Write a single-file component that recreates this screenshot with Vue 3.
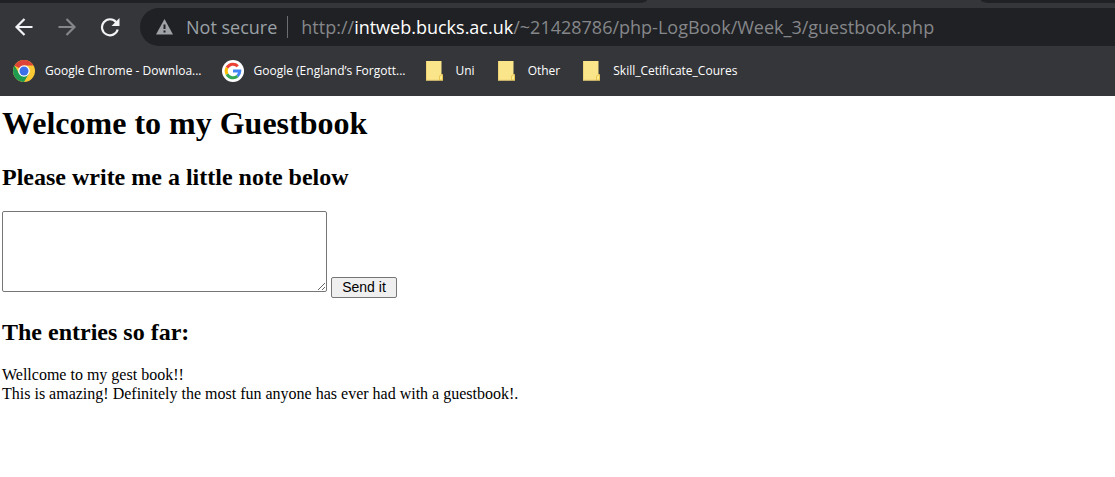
<script setup>
import { ref } from 'vue'

const note = ref('')
const folders = ['Uni', 'Other', 'Skill_Cetificate_Coures']
const entries = [
  'Wellcome to my gest book!!',
  'This is amazing! Definitely the most fun anyone has ever had with a guestbook!.',
]
</script>

<template>
  <div class="browser">
    <header class="chrome">
      <div class="tabs">
        <div class="tab-left"></div>
        <div class="tab-right"></div>
      </div>
      <div class="toolbar">
        <nav class="nav">
          <button type="button" aria-label="Back">
            <svg width="20" height="20" viewBox="0 0 20 20" fill="none" stroke="#f1f3f4" stroke-width="2.2">
              <path d="M18.500 10H3M10.500 2 2.500 10l8 8" />
            </svg>
          </button>
          <button type="button" aria-label="Forward" disabled>
            <svg width="20" height="20" viewBox="0 0 20 20" fill="none" stroke="#85868a" stroke-width="2.2">
              <path d="M1.500 10h16M9.500 2l8 8-8 8" />
            </svg>
          </button>
          <button type="button" aria-label="Reload">
            <svg width="20" height="20" viewBox="0 0 20 20">
              <path d="M16.200 5.200A8 8 0 1 0 17.700 12.500" fill="none" stroke="#f1f3f4" stroke-width="2.2" />
              <path d="M19.500 1v8h-8z" fill="#f1f3f4" />
            </svg>
          </button>
        </nav>
        <div class="omnibox">
          <svg class="warn" width="17" height="16" viewBox="0 0 17 16">
            <path d="M8.500 0 17 15.500H0z" fill="#9fa2a6" />
            <path d="M7.500 5.500h2v4.500h-2zM7.500 11.500h2v2h-2z" fill="#202124" />
          </svg>
          <span class="secure">Not secure</span>
          <span class="rule"></span>
          <span class="url">http://<b>intweb.bucks.ac.uk</b>/~21428786/php-LogBook/Week_3/guestbook.php</span>
        </div>
      </div>
      <nav class="bookmarks">
        <a class="mark" href="#">
          <svg width="22" height="22" viewBox="0 0 22 22">
            <circle cx="11" cy="11" r="11" fill="#fbc934" />
            <path d="M11 11 1.500 5.500A11 11 0 0 1 20.500 5.500H11z" fill="#dc4437" />
            <path d="M1.500 5.500A11 11 0 0 0 11 22L15.800 13.700 11 11 6.300 13.700z" fill="#1e9b50" />
            <circle cx="11" cy="11" r="5.800" fill="#fff" />
            <circle cx="11" cy="11" r="4.500" fill="#3c70e8" />
          </svg>
          <span>Google Chrome - Downloa...</span>
        </a>
        <a class="mark" href="#">
          <svg width="22" height="22" viewBox="0 0 22 22">
            <circle cx="11" cy="11" r="11" fill="#fff" />
            <g fill="none" stroke-width="3">
              <path d="M5 7.800A6.800 6.800 0 0 1 15.800 6.200" stroke="#ea4335" />
              <path d="M5 14.200A6.800 6.800 0 0 1 5 7.800" stroke="#fbbc05" />
              <path d="M15.500 16.100A6.800 6.800 0 0 1 5 14.200" stroke="#34a853" />
              <path d="M11 11h6.800A6.800 6.800 0 0 1 15.500 16.100" stroke="#4285f4" />
            </g>
          </svg>
          <span>Google (England’s Forgott...</span>
        </a>
        <div class="folders">
          <a v-for="name in folders" :key="name" class="mark" href="#">
            <svg class="folder" width="17" height="20" viewBox="0 0 17 20">
              <path d="M0 0h15.500v13l1.500.8v5.700H0z" fill="#fbe58b" />
              <path d="M0 19.500V0h1v18.500h12v1z" fill="#efd477" />
              <path d="M13 19.500v-4.500l2-1.500h2v6z" fill="#e9c552" />
              <path d="M14 18.500v-3l1-1h1v4z" fill="#ffed91" />
            </svg>
            <span>{{ name }}</span>
          </a>
        </div>
      </nav>
    </header>
    <main class="page">
      <h1>Welcome to my Guestbook</h1>
      <h2><label for="note">Please write me a little note below</label></h2>
      <form class="form" @submit.prevent>
        <textarea id="note" v-model="note"></textarea>
        <button type="submit">Send it</button>
      </form>
      <h2>The entries so far:</h2>
      <p v-for="e in entries" :key="e">{{ e }}</p>
    </main>
  </div>
</template>

<style>
body {
  margin: 0;
  background: #fff;
}
</style>

<style scoped>
.chrome {
  background: #35363a;
  font-family: "Open Sans", "Noto Sans", sans-serif;
}
.tabs {
  display: flex;
  justify-content: space-between;
  height: 3px;
}
.tab-left,
.tab-right {
  background: #202124;
}
.tab-left {
  width: 58%;
  border-bottom-right-radius: 8px 3px;
}
.tab-right {
  width: 12%;
  border-bottom-left-radius: 8px 3px;
}
.toolbar {
  display: flex;
  align-items: center;
  padding-top: 5px;
}
.nav {
  display: flex;
  gap: 23px;
  padding: 0 20px 0 14px;
}
.nav button {
  display: flex;
  padding: 0;
  border: 0;
  background: none;
}
.omnibox {
  display: flex;
  flex: 1;
  align-items: center;
  height: 38px;
  padding-left: 16px;
  border-radius: 19px 0 0 19px;
  background: #202124;
  color: #9aa0a6;
  font-size: 18px;
  line-height: 24px;
  white-space: nowrap;
}
.secure {
  margin-left: 13px;
}
.rule {
  width: 1px;
  height: 22px;
  margin: 0 13px 0 10px;
  background: #6b6d70;
}
.url {
  color: #85878a;
}
.url b {
  color: #fff;
  font-weight: 400;
}
.bookmarks {
  display: flex;
  align-items: center;
  height: 50px;
  padding-left: 13px;
  gap: 20px;
}
.folders {
  display: flex;
  gap: 23px;
}
.mark {
  display: flex;
  align-items: center;
  gap: 10px;
  color: #fff;
  font-size: 12px;
  line-height: 16px;
  text-decoration: none;
  white-space: nowrap;
}
.folder {
  margin-right: 3px;
}
.page {
  padding: 9px 2px 0;
  color: #000;
  font-family: "Liberation Serif", serif;
  font-size: 16px;
  line-height: 19px;
}
h1 {
  margin: 0;
  font-size: 32px;
  line-height: 36px;
}
h2 {
  margin: 22px 0 20px;
  font-size: 24px;
  line-height: 28px;
}
.form {
  display: flex;
  align-items: flex-end;
  gap: 4px;
}
.form + h2 {
  margin: 20px 0 19px;
}
textarea {
  box-sizing: border-box;
  width: 325px;
  height: 81px;
  margin: 0 0 6px;
  border: 1px solid #767676;
  border-radius: 2px;
  background: #fff;
}
.form button {
  width: 66px;
  height: 21px;
  padding: 0;
  border: 1px solid #767676;
  border-radius: 2px;
  background: #efefef;
  color: #000;
  font-family: "Liberation Sans", sans-serif;
  font-size: 14px;
  line-height: 19px;
}
p {
  margin: 0;
}
</style>
